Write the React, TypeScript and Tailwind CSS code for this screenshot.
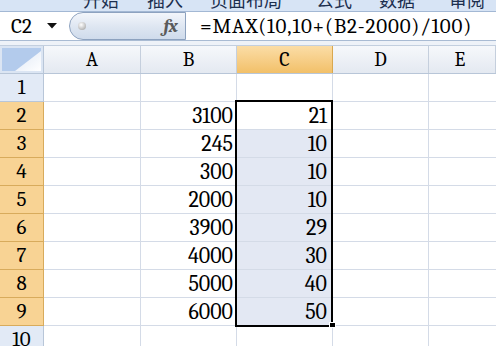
import React from "react";

const rows: { n: number; b: string; c: string }[] = [
  { n: 1, b: "", c: "" },
  { n: 2, b: "3100", c: "21" },
  { n: 3, b: "245", c: "10" },
  { n: 4, b: "300", c: "10" },
  { n: 5, b: "2000", c: "10" },
  { n: 6, b: "3900", c: "29" },
  { n: 7, b: "4000", c: "30" },
  { n: 8, b: "5000", c: "40" },
  { n: 9, b: "6000", c: "50" },
  { n: 10, b: "", c: "" },
];

const serif = "font-['Liberation_Serif','DejaVu_Serif',serif]";

export default function App() {
  return (
    <div className={"w-[496px] h-[346px] overflow-hidden bg-white flex flex-col text-black font-serif " + serif}>
      {/* ribbon tabs (cut off) */}
      <div className="h-[12px] shrink-0 overflow-hidden bg-[#d7e4f5] border-b border-[#a3b8d4] font-['Noto_Sans_CJK_SC'] text-[18px] leading-[18px] text-[#1c2f4f]">
        <div className="flex -mt-[10px]">
          <span className="ml-[83px]">开始</span>
          <span className="ml-[28px]">插入</span>
          <span className="ml-[27px]">页面布局</span>
          <span className="ml-[34px]">公式</span>
          <span className="ml-[27px]">数据</span>
          <span className="ml-[34px]">审阅</span>
        </div>
      </div>

      {/* formula bar */}
      <div className="h-[29px] shrink-0 flex border-b border-[#a9bbd3] bg-white">
        <div className="w-[69px] flex items-center">
          <span className="ml-[11px] text-[21px] leading-none">C2</span>
          <svg className="ml-[15px]" width="10" height="6" viewBox="0 0 10 6">
            <path d="M0 0 L10 0 L5 5.5 Z" fill="#111" />
          </svg>
        </div>
        <div className="w-[117px] h-[28px] rounded-l-[14px] border border-[#8da2bf] bg-gradient-to-b from-[#f3f6fb] via-[#dfe7f2] to-[#cfdbeb] flex items-center">
          <div className="ml-[8px] w-[8px] h-[8px] rounded-full bg-[radial-gradient(circle_at_40%_35%,#ffffff,#9a9a9a)]" />
          <span className="ml-auto mr-[8px] italic font-bold text-[19px] leading-none text-[#5a5a5a] tracking-[-1px]">fx</span>
        </div>
        <div className="flex-1 flex items-center">
          <span className="ml-[14px] text-[21px] leading-none tracking-[0.85px]">=MAX(10,10+(B2-2000)/100)</span>
        </div>
      </div>

      {/* spacer strip */}
      <div className="h-[5px] shrink-0 bg-[#eef2f8] border-b border-[#c3cfdf]" />

      {/* grid */}
      <div className="relative flex-1">
        {/* header row */}
        <div className="flex h-[28px] border-b border-[#b8c6d8]">
          <div className="w-[44px] shrink-0 border-r border-[#b8c6d8] bg-[#dbe5f3] p-[2px]">
            <div className="w-full h-full bg-[#b3cbec] flex items-end justify-end">
              <svg width="26" height="20" viewBox="0 0 26 20">
                <defs>
                  <linearGradient id="tri" x1="0" y1="0" x2="1" y2="1">
                    <stop offset="0" stopColor="#dfe8f5" />
                    <stop offset="1" stopColor="#ffffff" />
                  </linearGradient>
                </defs>
                <path d="M26 0 L26 20 L0 20 Z" fill="url(#tri)" />
              </svg>
            </div>
          </div>
          {["A", "B", "C", "D", "E"].map((l, i) => (
            <div
              key={l}
              className={
                (i === 0 ? "w-[97px] " : i === 4 ? "flex-1 " : "w-[96px] ") +
                "shrink-0 flex items-center justify-center text-[20px] leading-none border-r " +
                (l === "C"
                  ? "bg-gradient-to-b from-[#fbdda6] to-[#f2c068] border-[#d9a84f]"
                  : "bg-gradient-to-b from-[#f6f8fb] to-[#e4e9f1] border-[#c5cfdd]")
              }
            >
              <span className={i === 4 ? "mr-[4px]" : ""}>{l}</span>
            </div>
          ))}
        </div>

        {rows.map((r) => {
          const sel = r.n >= 2 && r.n <= 9;
          return (
            <div key={r.n} className="flex h-[28px]">
              <div
                className={
                  "w-[44px] shrink-0 flex items-center justify-center text-[21px] leading-none border-r border-b " +
                  (sel
                    ? "bg-[#f8d394] border-[#d8ab5c]"
                    : "bg-[#e2eaf6] border-[#b8c6d8]")
                }
              >
                {r.n}
              </div>
              <div className="w-[97px] shrink-0 border-r border-b border-[#d4dbe7]" />
              <div className="w-[96px] shrink-0 border-r border-b border-[#d4dbe7] flex items-center justify-end pr-[3px] text-[22px] leading-none">
                {r.b}
              </div>
              <div
                className={
                  "w-[96px] shrink-0 border-r border-b border-[#d4dbe7] flex items-center justify-end pr-[5px] text-[22px] leading-none " +
                  (sel && r.n !== 2 ? "bg-[#e3e8f3]" : "")
                }
              >
                {r.c}
              </div>
              <div className="w-[96px] shrink-0 border-r border-b border-[#d4dbe7]" />
              <div className="flex-1 border-b border-[#d4dbe7]" />
            </div>
          );
        })}

        {/* selection overlay */}
        <div className="absolute left-[235px] top-[54px] w-[98px] h-[227px] border-[2px] border-black pointer-events-none" />
        <div className="absolute left-[329px] top-[276px] w-[7px] h-[6px] bg-black border border-white pointer-events-none" />
      </div>
    </div>
  );
}
